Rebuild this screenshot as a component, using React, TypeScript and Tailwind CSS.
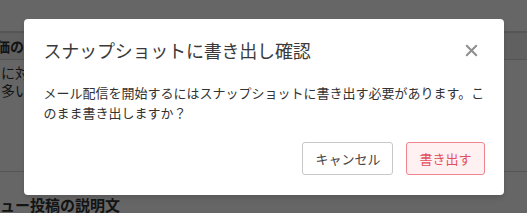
import { X } from 'lucide-react';

function BackgroundPage() {
  return (
    <div className="h-[213px] w-full overflow-hidden bg-white text-[#333]">
      <div className="h-[31px]" />
      <div className="h-[29px] border-t-2 border-b border-[#d4d4d4] bg-[#efefef] flex items-center">
        <span className="-ml-[4px] text-[14px] font-bold whitespace-nowrap">価の評</span>
      </div>
      <div className="h-[112px] border-b border-[#d4d4d4] pt-[3px] pl-[1px]">
        <p className="text-[14px] leading-[18px] whitespace-nowrap">に対</p>
        <p className="text-[14px] leading-[18px] whitespace-nowrap">多い</p>
      </div>
      <div className="pt-[20px]">
        <span className="text-[15px] font-bold whitespace-nowrap">ュー投稿の説明文</span>
      </div>
    </div>
  );
}

export default function App() {
  return (
    <div
      className="relative h-[213px] w-full overflow-hidden"
      style={{ fontFamily: '"Noto Sans CJK JP", "Noto Sans", sans-serif' }}
    >
      <BackgroundPage />
      <div className="absolute inset-0 bg-black/60 flex justify-center pt-[19px]">
        <div className="w-[480px] h-[176px] bg-white rounded-[4px] shadow-md flex flex-col">
          <div className="flex items-center justify-between pl-5 pr-[23px] pt-5">
            <h2 className="text-[18px] leading-[22px] text-[#3a3a3a] font-normal tracking-[-0.2px]">
              スナップショットに書き出し確認
            </h2>
            <button className="text-[#8f8f8f]">
              <X className="w-[19px] h-[19px]" strokeWidth={2.6} />
            </button>
          </div>
          <p className="pl-5 pr-4 pt-[22px] text-[13px] leading-[20px] text-[#333]">
            メール配信を開始するにはスナップショットに書き出す必要があります。このまま書き出しますか？
          </p>
          <div className="flex justify-end gap-[13px] pr-[19px] pt-[19px]">
            <button className="h-[33px] px-3 border border-[#c8c8c8] rounded-[3px] bg-white text-[13px] text-[#444]">
              キャンセル
            </button>
            <button className="h-[33px] px-3 border border-[#f0848d] rounded-[3px] bg-[#fff0f1] text-[13px] text-[#e2505c]">
              書き出す
            </button>
          </div>
        </div>
      </div>
    </div>
  );
}
